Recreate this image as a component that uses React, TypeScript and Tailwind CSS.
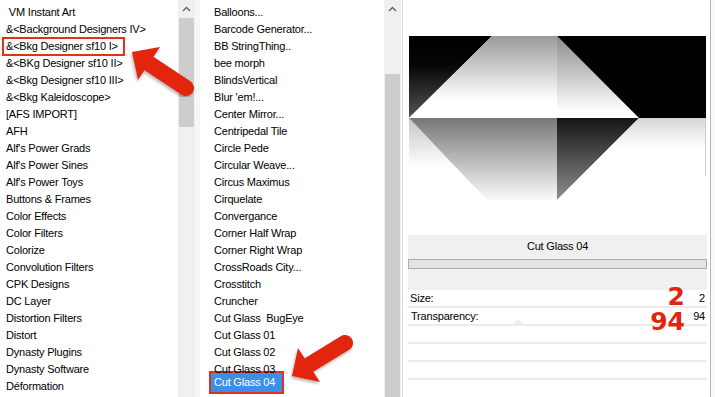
import React from 'react';

const leftItems = [
  ' VM Instant Art',
  '&<Background Designers IV>',
  '&<Bkg Designer sf10 I>',
  '&<BKg Designer sf10 II>',
  '&<Bkg Designer sf10 III>',
  '&<Bkg Kaleidoscope>',
  '[AFS IMPORT]',
  'AFH',
  "Alf's Power Grads",
  "Alf's Power Sines",
  "Alf's Power Toys",
  'Buttons & Frames',
  'Color Effects',
  'Color Filters',
  'Colorize',
  'Convolution Filters',
  'CPK Designs',
  'DC Layer',
  'Distortion Filters',
  'Distort',
  'Dynasty Plugins',
  'Dynasty Software',
  'Déformation',
];

const midItems = [
  'Balloons...',
  'Barcode Generator...',
  'BB StringThing..',
  'bee morph',
  'BlindsVertical',
  "Blur 'em!...",
  'Center Mirror...',
  'Centripedal Tile',
  'Circle Pede',
  'Circular Weave...',
  'Circus Maximus',
  'Cirquelate',
  'Convergance',
  'Corner Half Wrap',
  'Corner Right Wrap',
  'CrossRoads City...',
  'Crosstitch',
  'Cruncher',
  'Cut Glass  BugEye',
  'Cut Glass 01',
  'Cut Glass 02',
  'Cut Glass 03',
  'Cut Glass 04',
];

const UpArrow = () => (
  <svg width="9" height="6" viewBox="0 0 9 6">
    <path d="M1 5 L4.5 1.5 L8 5" fill="none" stroke="#606060" strokeWidth="1.4" />
  </svg>
);

const Preview = () => (
  <svg width="297" height="164" viewBox="0 0 297 164">
    <defs>
      <linearGradient id="tl" x1="0" y1="0" x2="0" y2="1">
        <stop offset="0" stopColor="#000" />
        <stop offset="0.35" stopColor="#050505" />
        <stop offset="1" stopColor="#555" />
      </linearGradient>
      <linearGradient id="tc" x1="0" y1="0" x2="0" y2="1">
        <stop offset="0" stopColor="#9a9a9a" />
        <stop offset="0.78" stopColor="#fff" />
      </linearGradient>
      <linearGradient id="tr" x1="0" y1="0" x2="0" y2="1">
        <stop offset="0" stopColor="#8c8c8c" />
        <stop offset="0.92" stopColor="#fff" />
      </linearGradient>
      <linearGradient id="bl" x1="0" y1="0" x2="0" y2="1">
        <stop offset="0" stopColor="#c6c6c6" />
        <stop offset="0.6" stopColor="#fff" />
      </linearGradient>
      <linearGradient id="bc" x1="0" y1="0" x2="0" y2="1">
        <stop offset="0" stopColor="#777" />
        <stop offset="1" stopColor="#fafafa" />
      </linearGradient>
      <linearGradient id="bcr" x1="0" y1="0" x2="0" y2="1">
        <stop offset="0" stopColor="#151515" />
        <stop offset="1" stopColor="#8e8e8e" />
      </linearGradient>
      <linearGradient id="br" x1="0" y1="0" x2="0" y2="1">
        <stop offset="0" stopColor="#d6d6d6" />
        <stop offset="0.35" stopColor="#fff" />
      </linearGradient>
    </defs>
    <polygon points="0,0 83,0 0,82" fill="url(#tl)" />
    <polygon points="83,0 148,0 148,82 0,82" fill="url(#tc)" />
    <polygon points="148,0 230,82 148,82" fill="url(#tr)" />
    <polygon points="148,0 297,0 297,82 230,82" fill="#000" />
    <polygon points="0,82 78,164 0,164" fill="url(#bl)" />
    <polygon points="0,82 148,82 148,164 78,164" fill="url(#bc)" />
    <polygon points="148,82 230,82 148,164" fill="url(#bcr)" />
    <polygon points="230,82 297,82 297,164 148,164" fill="url(#br)" />
    <line x1="296.5" y1="82" x2="296.5" y2="140" stroke="#cfcfcf" />
  </svg>
);

const Arrows = () => (
  <svg className="absolute left-0 top-0 pointer-events-none" width="715" height="397" viewBox="0 0 715 397">
    <defs>
      <filter id="sh" x="-20%" y="-20%" width="140%" height="140%">
        <feDropShadow dx="-1" dy="2" stdDeviation="1.5" floodColor="#000" floodOpacity="0.3" />
      </filter>
    </defs>
    <g filter="url(#sh)" fill="#e2260e">
      <line x1="149" y1="63.5" x2="186" y2="88" stroke="#e2260e" strokeWidth="16" strokeLinecap="round" />
      <polygon points="132,52 160,47 138,80" />
    </g>
    <g filter="url(#sh)" fill="#e2260e">
      <line x1="309" y1="365" x2="345" y2="343" stroke="#e2260e" strokeWidth="16" strokeLinecap="round" />
      <polygon points="292,376 298,348 320,382" />
    </g>
  </svg>
);

export default function App() {
  return (
    <div className="relative w-[715px] h-[397px] overflow-hidden bg-white font-['Liberation_Sans',Arial,sans-serif] text-[11px] tracking-[-0.2px] text-black">
      <div className="flex h-full">
        {/* left list */}
        <div className="w-[178px] h-full overflow-hidden pt-[4px]">
          {leftItems.map((t, i) => (
            <div key={i} className="h-[17px] leading-[17px] pl-[6px] whitespace-pre">{t}</div>
          ))}
        </div>
        <div className="w-[17px] h-full bg-[#f0f0f0] flex flex-col">
          <div className="h-[17px] flex items-center justify-center"><UpArrow /></div>
          <div className="mx-[1px] mt-[1px] h-[109px] bg-[#cdcdcd]" />
        </div>
        <div className="w-[5px] h-full bg-[#f6f6f6]" />

        {/* middle list */}
        <div className="w-[184px] h-full overflow-hidden pt-[4px]">
          {midItems.map((t, i) =>
            i === midItems.length - 1 ? (
              <div key={i} className="h-[17px] pl-[14px]">
                <div className="-ml-[5px] -mt-[7px] w-[75px] h-[23px] border-2 border-[#e3301c] bg-[#3a8fe8] pl-[3px] leading-[19px] text-white whitespace-pre">{t}</div>
              </div>
            ) : (
              <div key={i} className="h-[17px] leading-[17px] pl-[14px] whitespace-pre">{t}</div>
            )
          )}
        </div>
        <div className="w-[17px] h-full bg-[#f0f0f0] flex flex-col">
          <div className="h-[17px] flex items-center justify-center"><UpArrow /></div>
          <div className="mx-[1px] mt-[57px] flex-1 bg-[#cdcdcd]" />
        </div>
        <div className="w-[1px] h-full bg-white" />
        <div className="w-[1px] h-full bg-[#dcdcdc]" />

        {/* right panel */}
        <div className="w-[308px] h-full border-r border-[#b5b5b5] pl-[5px] pr-[3px] pt-[36px] flex flex-col">
          <div className="ml-[1px]"><Preview /></div>
          <div className="mt-[35px] h-[55px] bg-[#f0f0f0] flex flex-col">
            <div className="pt-[3px] h-[20px] leading-[17px] text-center">Cut Glass 04</div>
            <div className="mt-[4px] h-[10px] bg-[#e4e4e4] border border-[#adadad]" />
          </div>
          <div className="h-[18px] border-b-2 border-[#ececec] flex items-center justify-between pl-[2px] pr-[2px]">
            <span>Size:</span>
            <span>2</span>
          </div>
          <div className="h-[18px] border-b-2 border-[#ececec] flex items-center justify-between pl-[3px] pr-[2px]">
            <span>Transparency:</span>
            <span>94</span>
          </div>
          <div className="h-[18px] border-b-2 border-[#ececec]" />
          <div className="h-[18px] border-b-2 border-[#ececec]" />
          <div className="h-[18px] border-b-2 border-[#ececec]" />
        </div>
        <div className="flex-1 h-full bg-[#f9f9f9]" />
      </div>

      {/* annotations */}
      <div className="absolute left-[2px] top-[37px] w-[123px] h-[19px] border-2 border-[#e3301c]" />
      <div className="absolute left-[511px] top-[319px] w-0 h-0 border-l-[7px] border-r-[7px] border-b-[7px] border-l-transparent border-r-transparent border-b-[#ececec]" />
      <div className="absolute left-[620px] top-[287px] w-[65px] text-right font-['DejaVu_Sans',sans-serif] font-bold text-[25px] leading-[20px] tracking-normal text-[#e2260e]">2</div>
      <div className="absolute left-[620px] top-[312px] w-[65px] text-right font-['DejaVu_Sans',sans-serif] font-bold text-[25px] leading-[20px] tracking-normal text-[#e2260e]">94</div>
      <Arrows />
    </div>
  );
}
